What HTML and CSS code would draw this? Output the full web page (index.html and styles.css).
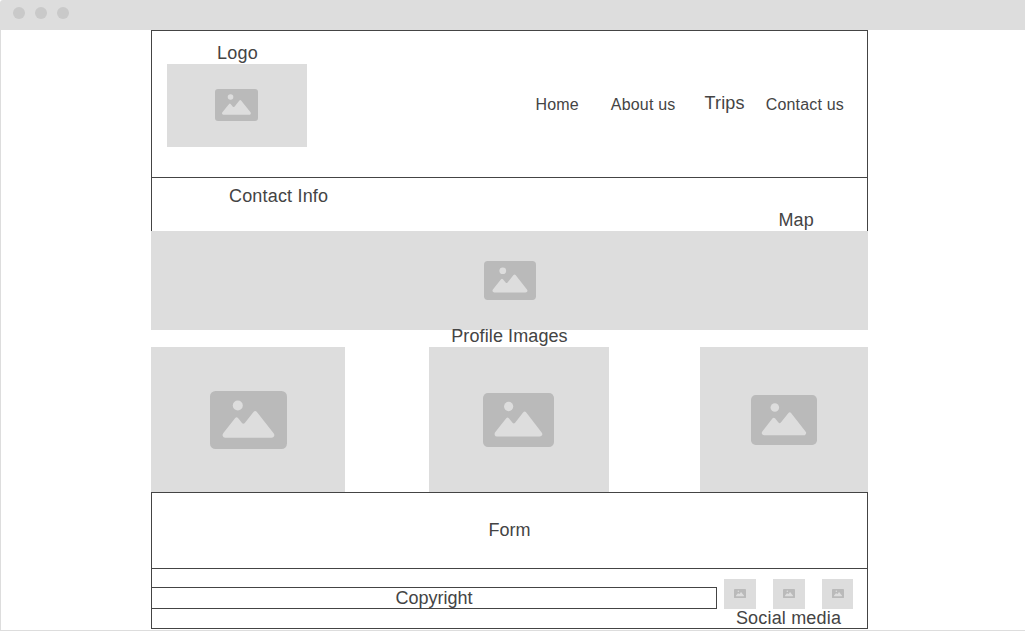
FILE: index.html
```
<!DOCTYPE html>
<html lang="en">
<head>
<meta charset="utf-8">
<title>Wireframe</title>
<link rel="stylesheet" href="styles.css">
</head>
<body>
<svg class="defs" aria-hidden="true">
  <symbol id="picture" viewBox="0 0 77 58" preserveAspectRatio="none">
    <rect width="77" height="58" rx="5.5" fill="#bababa"/>
    <circle cx="27.8" cy="14.5" r="5" fill="#dddddd"/>
    <path d="M25.2 27.1Q26.6 25.5 28 27.1L32 32Q33.4 33.6 34.8 32L43.7 20.8Q45.2 19 46.7 20.8L63.6 42.3Q65.2 44.5 63.4 46Q62.8 46.7 61.5 46.7H15.2Q13.2 46.7 12.7 45Q12.3 43.5 13.2 42.2Z" fill="#dddddd"/>
  </symbol>
</svg>
<div class="browser">
  <div class="titlebar"><i class="dot"></i><i class="dot"></i><i class="dot"></i></div>
  <div class="viewport">
    <main class="page">
      <header class="header">
        <div class="brand">
          <span class="label">Logo</span>
          <div class="image logo"><svg><use href="#picture"/></svg></div>
        </div>
        <nav class="nav">
          <a>Home</a><a>About us</a><a class="large">Trips</a><a>Contact us</a>
        </nav>
      </header>
      <section class="info">
        <span class="contact">Contact Info</span>
        <span class="map">Map</span>
      </section>
      <div class="image banner"><svg><use href="#picture"/></svg></div>
      <h2 class="profile-title">Profile Images</h2>
      <section class="profiles">
        <div class="image first"><svg><use href="#picture"/></svg></div>
        <div class="image second"><svg><use href="#picture"/></svg></div>
        <div class="image third"><svg><use href="#picture"/></svg></div>
      </section>
      <section class="form">Form</section>
      <footer class="footer">
        <div class="copyright">Copyright</div>
        <div class="social">
          <div class="social-icons">
            <div class="image small"><svg><use href="#picture"/></svg></div>
            <div class="image small"><svg><use href="#picture"/></svg></div>
            <div class="image small"><svg><use href="#picture"/></svg></div>
          </div>
          <span class="social-label">Social media</span>
        </div>
      </footer>
    </main>
  </div>
</div>
</body>
</html>
```
FILE: styles.css
```
* { box-sizing: border-box; }
body {
  margin: 0;
  background: #fff;
  color: #444;
  font: 18px/20px "Liberation Sans", Arial, sans-serif;
  letter-spacing: 0.18px;
}
.defs { position: absolute; width: 0; height: 0; }
.browser {
  display: flex;
  flex-direction: column;
  height: 631px;
  overflow: hidden;
}
.titlebar {
  display: flex;
  flex: none;
  gap: 10px;
  height: 30px;
  padding: 7px 13px;
  background: #ddd;
  border-top-left-radius: 3px;
}
.dot { width: 12px; height: 12px; border-radius: 50%; background: #c9c9c9; }
.viewport {
  flex: 1;
  padding-left: 150px;
  border-left: 1px solid #ddd;
  border-bottom: 1px solid #ddd;
}
.page { width: 717px; }
.image { display: flex; align-items: center; justify-content: center; background: #ddd; }
.image svg { display: block; flex: none; }
.header {
  display: flex;
  justify-content: space-between;
  height: 148px;
  padding: 12px 23px 0 15px;
  border: 1px solid #444;
}
.brand { display: flex; flex-direction: column; width: 140px; }
.label { height: 21px; padding-left: 1px; text-align: center; }
.logo { height: 83px; }
.logo svg { width: 43px; height: 32px; margin: 0 1px 1px 0; }
.nav { display: flex; align-items: baseline; padding-top: 51px; font-size: 16px; }
.nav a { margin-left: 32px; }
.nav a.large { margin-left: 29px; font-size: 18px; line-height: 20px; transform: translateY(-1px); }
.nav a.large + a { margin-left: 21px; }
.info {
  display: flex;
  justify-content: space-between;
  height: 53px;
  padding: 8px 53px 0 77px;
  border: solid #444;
  border-width: 0 1px;
}
.map { padding-top: 24px; }
.banner { height: 99px; }
.banner svg { width: 52px; height: 39px; }
.profile-title { height: 17px; margin: 0; font-size: 18px; font-weight: 400; line-height: 13px; letter-spacing: 0.1px; text-align: center; }
.profiles { display: flex; justify-content: space-between; height: 145px; }
.first { width: 194px; }
.first svg { width: 77px; height: 58px; }
.second { width: 180px; margin-right: 7px; }
.second svg { width: 71px; height: 54px; margin-right: 1px; }
.third { width: 168px; }
.third svg { width: 66px; height: 50px; }
.form { height: 77px; border: 1px solid #444; line-height: 75px; letter-spacing: 0; text-align: center; }
.footer { display: flex; height: 60px; border: 1px solid #444; border-top: 0; }
.copyright {
  width: 566px;
  height: 22px;
  margin: 18px 0 0 -1px;
  border: 1px solid #444;
  letter-spacing: 0;
  text-align: center;
}
.social { display: flex; flex-direction: column; width: 129px; margin: 10px 0 0 7px; }
.social-icons { display: flex; gap: 17px; height: 30px; }
.small { width: 32px; }
.small:last-child { width: 31px; }
.small svg { width: 12px; height: 9px; margin-bottom: 1px; }
.small:last-child svg { margin-left: 1px; }
.social-label { height: 19px; line-height: 19px; text-align: center; }
```
